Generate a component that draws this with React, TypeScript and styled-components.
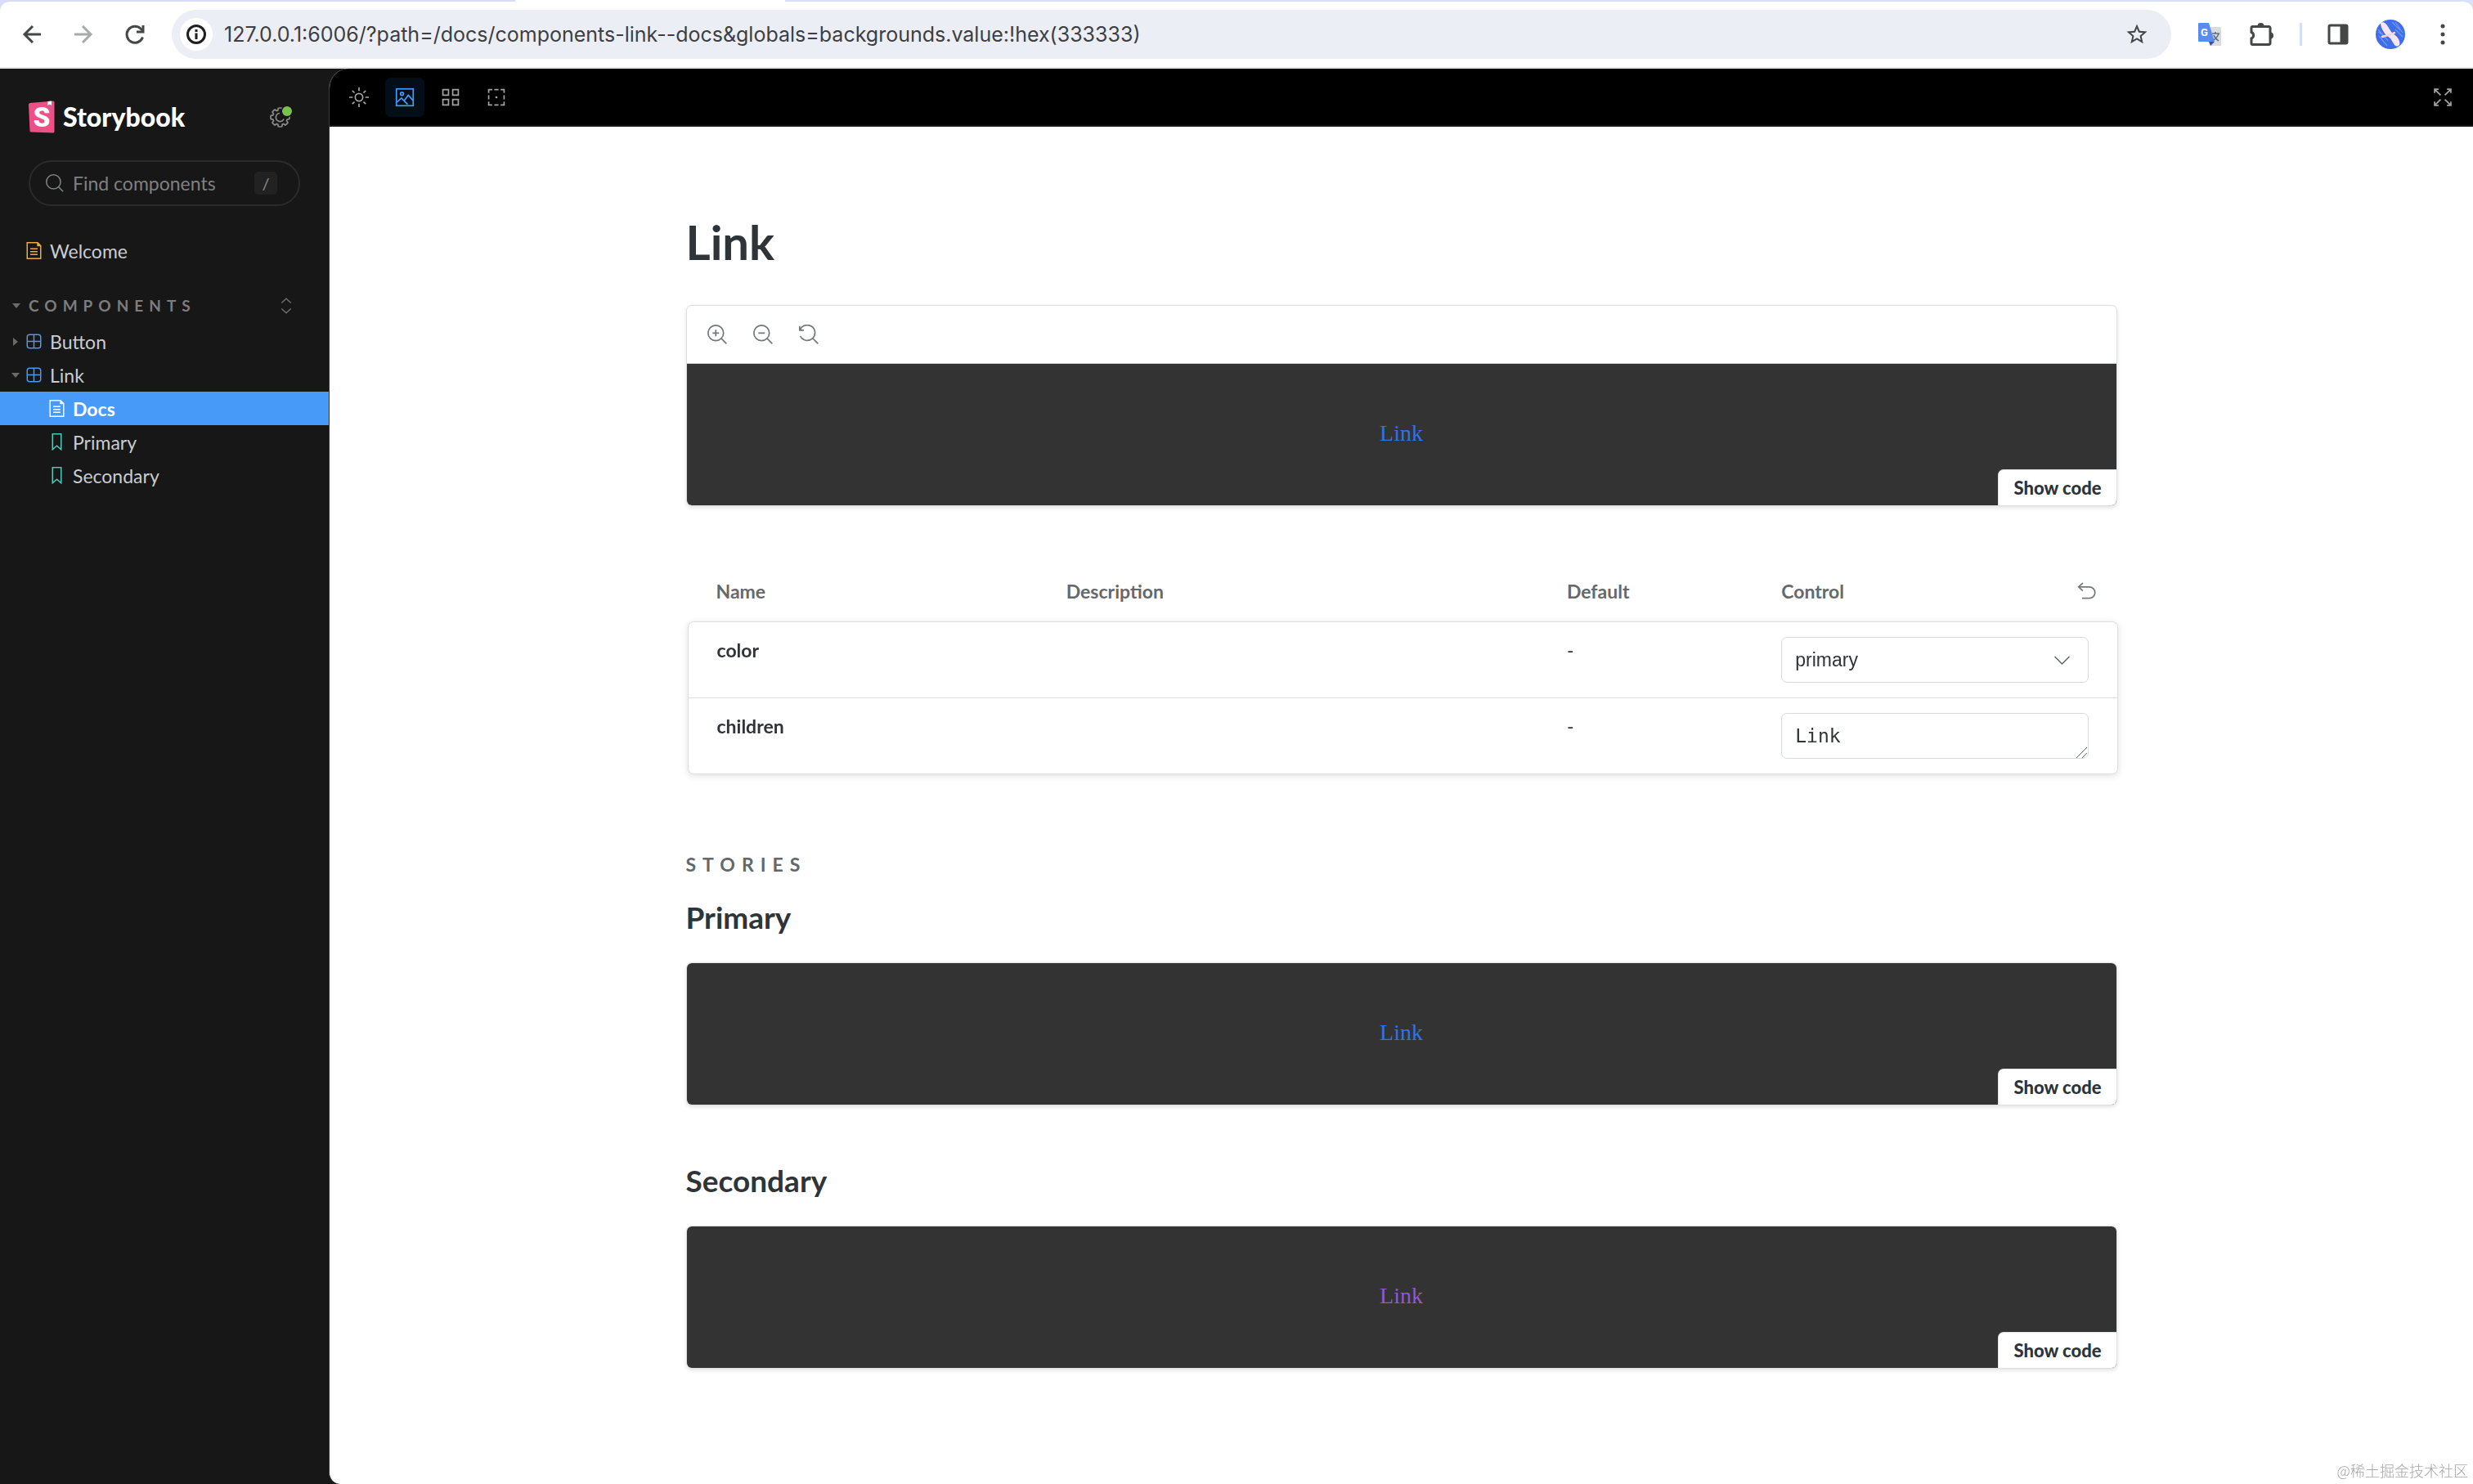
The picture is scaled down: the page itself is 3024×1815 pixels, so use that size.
import React from 'react';
import styled, { createGlobalStyle, css } from 'styled-components';

const sans = `"Lato", "Open Sans", sans-serif`;
const chromeSans = `"Inter", "Liberation Sans", sans-serif`;

const Reset = createGlobalStyle`
  *, *::before, *::after { box-sizing: border-box; }
  body { margin: 0; background: #171717; font-family: ${sans}; }
  button, input, select, textarea { font: inherit; color: inherit; }
  h1, h2, h3 { margin: 0; }
`;

const Page = styled.div`
  min-height: 100vh;
  display: flex;
  flex-direction: column;
`;

/* ---------- Browser chrome ---------- */

const TabStrip = styled.div`
  background: linear-gradient(to right, #d8dcf8 630px, #ffffff 630px, #ffffff 960px, #d8e1fa 960px);
  padding-top: 2px;
`;

const AddressRow = styled.header`
  display: flex;
  align-items: center;
  height: 82px;
  padding: 0 17px 0 19px;
  background: #ffffff;
  border-bottom: 2px solid #e6e6e6;
  border-radius: 12px 12px 0 0;
`;

const IconButton = styled.button<{ $tone?: string }>`
  display: flex;
  align-items: center;
  justify-content: center;
  flex: none;
  width: 40px;
  height: 40px;
  padding: 0;
  border: 0;
  background: none;
  color: ${(p) => p.$tone ?? '#444746'};
`;

const NavButtons = styled.div`
  display: flex;
  gap: 23px;
  margin-right: 25px;
`;

const Omnibox = styled.div`
  display: flex;
  align-items: center;
  flex: 1;
  height: 60px;
  padding: 0 22px 0 10px;
  border-radius: 30px;
  background: #eceef5;
`;

const SiteInfo = styled(IconButton)`
  border-radius: 50%;
  background: #ffffff;
`;

const Address = styled.input`
  flex: 1;
  min-width: 0;
  margin-left: 14px;
  padding: 0;
  border: 0;
  outline: 0;
  background: none;
  font: 400 25px/32px ${chromeSans};
  color: #3c3f43;
`;

const ChromeActions = styled.div`
  display: flex;
  align-items: center;
  gap: 24px;
  padding-left: 27px;
`;

const ChromeDivider = styled.span`
  width: 3px;
  height: 28px;
  margin: 0 0 0 2px;
  background: #d3defb;
`;

/* ---------- Sidebar ---------- */

const Workspace = styled.div`
  display: flex;
  flex: 1;
  background: #171717;
`;

const Sidebar = styled.aside`
  flex: none;
  width: 402px;
  padding-top: 28px;
  color: #c9ccd0;
`;

const Brand = styled.div`
  display: flex;
  align-items: center;
  height: 62px;
  margin-bottom: 22px;
  padding: 0 35px;
`;

const BrandLink = styled.a`
  display: flex;
  align-items: center;
  gap: 10px;
  flex: 1;
  color: #ffffff;
  font-size: 32px;
  line-height: 40px;
  font-weight: 900;
  text-decoration: none;
`;

const SettingsButton = styled(IconButton)`
  width: 45px;
  color: #8b8b8b;
`;

const SearchBox = styled.label`
  display: flex;
  align-items: center;
  height: 56px;
  margin: 0 35px 34px;
  padding: 0 26px 0 19px;
  border: 2px solid #2b2b2b;
  border-radius: 28px;
  color: #7f8082;
`;

const SearchInput = styled.input`
  flex: 1;
  min-width: 0;
  margin-left: 11px;
  padding: 0;
  border: 0;
  outline: 0;
  background: none;
  font-size: 23px;
  line-height: 32px;
  &::placeholder { color: #7f8082; opacity: 1; }
`;

const Key = styled.kbd`
  width: 28px;
  border-radius: 5px;
  background: #222222;
  font: 400 20px/28px ${sans};
  text-align: center;
  color: #8f8f8f;
`;

const Tree = styled.nav`
  display: flex;
  flex-direction: column;
`;

const TreeRow = styled.a<{ $child?: boolean; $selected?: boolean }>`
  display: flex;
  align-items: center;
  height: 41px;
  padding-left: ${(p) => (p.$child ? 41 : 13)}px;
  color: #c9ccd0;
  font-size: 23px;
  line-height: 32px;
  text-decoration: none;
  ${(p) =>
    p.$selected &&
    css`
      background: #479af8;
      color: #ffffff;
      font-weight: 700;
    `}
`;

const Caret = styled.span<{ $wide?: boolean }>`
  display: flex;
  justify-content: center;
  width: 12px;
  margin-right: ${(p) => (p.$wide ? 9 : 6)}px;
  color: #6b6b6b;
`;

const TreeIcon = styled.span`
  display: flex;
  width: 21px;
  margin-right: 9px;
`;

const GroupHeading = styled.div`
  display: flex;
  align-items: center;
  height: 46px;
  margin-top: 24px;
  padding: 0 32px 0 14px;
`;

const GroupToggle = styled.button`
  display: flex;
  align-items: center;
  flex: 1;
  padding: 0;
  border: 0;
  background: none;
  color: #7c7d7f;
  font-size: 19px;
  line-height: 28px;
  font-weight: 700;
  letter-spacing: 7px;
  text-transform: uppercase;
`;

const ExpandAll = styled(IconButton)`
  color: #6f6f6f;
`;

/* ---------- Main panel ---------- */

const Main = styled.main`
  flex: 1;
  min-width: 0;
  overflow: hidden;
  background: #ffffff;
  border-left: 1px solid #3a3a3a;
  border-radius: 24px 0 0 14px;
`;

const Toolbar = styled.div`
  display: flex;
  align-items: center;
  gap: 8px;
  height: 71px;
  padding: 0 13px 0 12px;
  background: #000000;
  border-bottom: 2px solid #181818;
`;

const ToolButton = styled(IconButton)<{ $active?: boolean; $push?: boolean }>`
  width: 48px;
  height: 48px;
  border-radius: 7px;
  color: ${(p) => (p.$active ? '#479af8' : '#a3a3a3')};
  background: ${(p) => (p.$active ? '#030e18' : 'none')};
  margin-left: ${(p) => (p.$push ? 'auto' : 0)};
`;

const Docs = styled.article`
  max-width: 1820px;
  margin: 0 auto;
  padding: 111px 35px 120px;
  color: #2e3438;
`;

const Title = styled.h1`
  margin-bottom: 47px;
  font-size: 58px;
  line-height: 60px;
  font-weight: 700;
`;

const StoriesHeading = styled.h2`
  margin: 96px 0 29px;
  color: #62686c;
  font-size: 23px;
  line-height: 28px;
  font-weight: 700;
  letter-spacing: 8px;
  text-transform: uppercase;
`;

const StoryTitle = styled.h3`
  margin: 0 0 33px;
  font-size: 37px;
  line-height: 44px;
  font-weight: 700;
`;

const Story = styled.section`
  & + & { margin-top: 70px; }
`;

const Card = styled.div`
  position: relative;
  overflow: hidden;
  border: 1px solid #dcdfe1;
  border-radius: 7px;
  box-shadow: 0 2px 5px rgba(0, 0, 0, 0.12);
  background: #ffffff;
`;

const CardToolbar = styled.div`
  display: flex;
  align-items: center;
  gap: 16px;
  height: 71px;
  padding-left: 17px;
  border-bottom: 1px solid #d3d6d8;
`;

const Canvas = styled.div`
  display: flex;
  align-items: center;
  justify-content: center;
  height: 173px;
  padding-bottom: 3px;
  background: #333333;
`;

const StoryLink = styled.a<{ $tone: string }>`
  color: ${(p) => p.$tone};
  font: 400 28px/32px "Liberation Serif", serif;
  text-decoration: none;
`;

const ShowCode = styled.button`
  position: absolute;
  right: 0;
  bottom: 0;
  height: 44px;
  padding: 0 18px;
  border: 1px solid #dfe2e4;
  border-width: 1px 0 0 1px;
  border-radius: 7px 0 0 0;
  background: #ffffff;
  color: #2e3438;
  font-size: 22px;
  line-height: 28px;
  font-weight: 900;
`;

const TableFrame = styled.div`
  margin: 79px -1px 0 2px;
`;

const ArgsTable = styled.table`
  width: 100%;
  table-layout: fixed;
  border-collapse: separate;
  border-spacing: 0;
  font-size: 23px;
  line-height: 32px;
  text-align: left;

  tbody { filter: drop-shadow(0 2px 4px rgba(0, 0, 0, 0.12)); }
`;

const HeadCell = styled.th<{ $width: number }>`
  width: ${(p) => p.$width}%;
  padding: 9px 26px 21px;
  color: #66696b;
  font-weight: 700;
  &:first-child { padding-left: 35px; }
  &:last-child { padding-right: 18px; }
`;

const HeadFlex = styled.div`
  display: flex;
  align-items: center;
  justify-content: space-between;
`;

const ResetButton = styled(IconButton)`
  height: 32px;
  color: #73787c;
`;

const Cell = styled.td`
  padding: 18px 26px;
  vertical-align: top;
  background: #ffffff;
  border-top: 1px solid #dcdfe1;
  &:first-child { padding-left: 35px; border-left: 1px solid #dcdfe1; font-weight: 700; }
  &:last-child { padding-right: 35px; border-right: 1px solid #dcdfe1; }
  tr:last-child > & { border-bottom: 1px solid #dcdfe1; }
  tr:first-child > &:first-child { border-top-left-radius: 7px; }
  tr:first-child > &:last-child { border-top-right-radius: 7px; }
  tr:last-child > &:first-child { border-bottom-left-radius: 7px; }
  tr:last-child > &:last-child { border-bottom-right-radius: 7px; }
`;

const ControlBox = styled.div`
  position: relative;
  display: flex;
`;

const control = css`
  width: 100%;
  height: 56px;
  margin: 0;
  padding: 11px 16px;
  border: 1px solid #d6dadc;
  border-radius: 7px;
  outline: 0;
  background: #ffffff;
  color: #2e3438;
`;

const Select = styled.select`
  ${control}
  appearance: none;
  font: 400 23px/32px "Liberation Sans", sans-serif;
`;

const TextArea = styled.textarea`
  ${control}
  resize: none;
  overflow: hidden;
  font: 400 23px/32px "DejaVu Sans Mono", monospace;
`;

const ControlMark = styled.span<{ $corner?: boolean }>`
  position: absolute;
  right: ${(p) => (p.$corner ? 1 : 22)}px;
  bottom: ${(p) => (p.$corner ? 1 : 17)}px;
  display: flex;
  color: #5f6366;
  pointer-events: none;
`;

const Watermark = styled.small`
  position: fixed;
  right: 6px;
  bottom: 4px;
  color: #a6a6a6;
  font: 300 18px/26px "Noto Sans CJK SC", sans-serif;
`;

/* ---------- Icons ---------- */

type IconProps = { size?: number; children: React.ReactNode; box?: number; weight?: number };

const Icon = ({ size = 24, box = 14, weight = 1, children }: IconProps) => (
  <svg
    width={size}
    height={size}
    viewBox={`0 0 ${box} ${box}`}
    fill="none"
    stroke="currentColor"
    strokeWidth={weight}
    aria-hidden="true"
  >
    {children}
  </svg>
);

const BackIcon = () => (
  <Icon size={24} box={24} weight={3}><path d="M23 12H3M13 2 3 12l10 10" /></Icon>
);
const ForwardIcon = () => (
  <Icon size={24} box={24} weight={3}><path d="M1 12h20M11 2l10 10-10 10" /></Icon>
);
const ReloadIcon = () => (
  <Icon size={26} box={26} weight={3}>
    <path d="M22.5 16.5A10 10 0 1 1 20 6l3 3" />
    <path d="M23 2v8h-8" />
  </Icon>
);
const InfoIcon = () => (
  <Icon size={26} box={26} weight={3}>
    <circle cx="13" cy="13" r="10.5" />
    <path d="M13 11.5V19M13 7v3" />
  </Icon>
);
const StarIcon = () => (
  <svg width="30" height="30" viewBox="0 0 24 24" fill="currentColor" aria-hidden="true">
    <path d="M22 9.240l-7.190-.620L12 2 9.190 8.630 2 9.240l5.460 4.730L5.820 21 12 17.270 18.180 21l-1.630-7.030L22 9.240zM12 15.400l-3.760 2.270 1-4.280-3.320-2.880 4.380-.380L12 6.100l1.710 4.040 4.380.380-3.320 2.880 1 4.280L12 15.400z" />
  </svg>
);
const TranslateIcon = () => (
  <svg width="28" height="28" viewBox="0 0 28 28" aria-hidden="true">
    <path d="M10 5h16a2 2 0 0 1 2 2v21H15z" fill="#d9dbdf" />
    <path d="M13 23h7l-5 5z" fill="#3c49b5" />
    <path d="M1 0h12l7 23H1a1 1 0 0 1-1-1V1a1 1 0 0 1 1-1z" fill="#5a8cf0" />
    <path d="M17 13h9M21 11v2M25 13c-1 4-3.500 6-6 8M19 15c1 3 3 5 6 7" stroke="#5d7180" strokeWidth="1.500" fill="none" />
    <text x="3" y="16" fontFamily="Roboto, sans-serif" fontSize="13" fontWeight="700" fill="#ffffff">G</text>
  </svg>
);
const PuzzleIcon = () => (
  <Icon size={30} box={30} weight={3}>
    <path d="M3.500 5.500h20a1.500 1.500 0 0 1 1.500 1.500v19a1.500 1.500 0 0 1-1.500 1.500h-20A1.500 1.500 0 0 1 2 26v-6a4 4 0 0 0 0-7.500V7a1.500 1.500 0 0 1 1.500-1.500z" />
    <path d="M9.500 5a4 4 0 0 1 8 0zM25 12.500a4 4 0 0 1 0 8z" fill="currentColor" stroke="none" />
  </Icon>
);
const PanelIcon = () => (
  <Icon size={26} box={26} weight={3}>
    <rect x="2" y="2" width="22" height="22" rx="1.500" />
    <path d="M15.500 2H24v22h-8.500z" fill="currentColor" stroke="none" />
  </Icon>
);
const Avatar = () => (
  <svg width="36" height="36" viewBox="0 0 36 36" aria-hidden="true">
    <circle cx="18" cy="18" r="18" fill="#3f6ee8" />
    <path d="M3 12l12 14M4 20l10 12M20 3l10 10M24 3l9 13M3 15l8 5M24 12l9 9" stroke="#7398f2" strokeWidth="1.200" />
    <path d="M6 4c3-2 6 0 8 3l5 8 7 6c3 4 4 7 3 10-2 2-4 2-6 0l-5-8-6-5C9 14 6 9 6 4z" fill="#f5e6f2" />
    <path d="M8 21c5-2 11-2 15-5" stroke="#f3d5e2" strokeWidth="2.500" fill="none" strokeLinecap="round" />
  </svg>
);
const MoreIcon = () => (
  <svg width="28" height="28" viewBox="0 0 28 28" fill="currentColor" aria-hidden="true">
    <circle cx="14" cy="4" r="2.500" />
    <circle cx="14" cy="14" r="2.500" />
    <circle cx="14" cy="24" r="2.500" />
  </svg>
);

const LogoMark = () => (
  <svg width="32" height="40" viewBox="0 0 32 40" aria-hidden="true">
    <path d="M1.500 3 30 .500a1.500 1.500 0 0 1 1.500 1.500v36a1.500 1.500 0 0 1-1.500 1.500L3 38.500A1.500 1.500 0 0 1 1.500 37L0 5a2 2 0 0 1 1.500-2z" fill="#ec5087" />
    <path d="M23.500 1l4.500-.500V6l-2.200-1.600L23.300 6z" fill="#ffffff" />
    <text x="16" y="32" textAnchor="middle" fontFamily="Roboto, sans-serif" fontSize="33" fontWeight="900" fill="#ffffff">S</text>
  </svg>
);

const gearOutline = Array.from({ length: 8 }, (_, i) => {
  const point = (offset: number, r: number) => {
    const a = ((i * 45 + offset) * Math.PI) / 180;
    return `${(12.5 + r * Math.cos(a)).toFixed(2)} ${(14.5 + r * Math.sin(a)).toFixed(2)}`;
  };
  return `${i ? 'L' : 'M'}${point(-11, 11.5)}A11.5 11.5 0 0 1 ${point(11, 11.5)}L${point(17, 9)}L${point(28, 9)}`;
}).join('') + 'Z';

const GearIcon = () => (
  <svg width="30" height="28" viewBox="0 0 30 28" fill="none" aria-hidden="true">
    <path d={gearOutline} stroke="currentColor" strokeWidth="1.700" strokeLinejoin="round" />
    <path d="M12 9.500a5 5 0 1 0 5 7" stroke="currentColor" strokeWidth="1.700" />
    <circle cx="21" cy="7" r="7.500" fill="#171717" />
    <circle cx="21" cy="7" r="6" fill="#79c14e" />
  </svg>
);

const SearchIcon = () => (
  <Icon size={22} weight={1}><circle cx="6" cy="6" r="5.500" /><path d="M10 10l3.500 3.500" /></Icon>
);
const SunIcon = () => (
  <Icon>
    <circle cx="7" cy="7" r="2.700" />
    <path d="M7 0v2.500M7 11.500V14M0 7h2.500M11.500 7H14M2.200 2.200l1.600 1.600M10.200 10.200l1.600 1.600M2.200 11.800l1.600-1.600M10.200 3.800l1.600-1.600" />
  </Icon>
);
const PhotoIcon = () => (
  <Icon>
    <rect x="1" y="1" width="12" height="12" />
    <circle cx="5" cy="4.500" r="1.100" />
    <path d="M1.500 10.500 4.500 7.500l2 2 3-4 3.500 4M6.500 9.500l2.500 2.500" />
  </Icon>
);
const GridIcon = () => (
  <Icon>
    <path d="M1.500 1.500h4v4h-4zM8.500 1.500h4v4h-4zM1.500 8.500h4v4h-4zM8.500 8.500h4v4h-4z" />
  </Icon>
);
const OutlineIcon = () => (
  <Icon>
    <path d="M1.500 4V1.500H4M10 1.500h2.500V4M12.500 10v2.500H10M4 12.500H1.500V10M5.500 1.500h3M5.500 12.500h3M1.500 5.500v3M12.500 5.500v3" />
    <circle cx="7" cy="7" r=".8" fill="currentColor" stroke="none" />
  </Icon>
);
const ExpandIcon = () => (
  <Icon>
    <path d="M1.200 4V1.200H4M1.200 1.200l4.300 4.300M10 1.200h2.800V4M12.800 1.200 8.500 5.500M12.800 10v2.800H10M12.800 12.800 8.500 8.500M4 12.800H1.200V10M1.200 12.800l4.300-4.300" />
  </Icon>
);
const ZoomInIcon = () => (
  <Icon><circle cx="6" cy="6" r="5.500" /><path d="M10 10l3.600 3.600M6 3.700v4.600M3.700 6h4.600" /></Icon>
);
const ZoomOutIcon = () => (
  <Icon><circle cx="6" cy="6" r="5.500" /><path d="M10 10l3.600 3.600M3.700 6h4.600" /></Icon>
);
const ZoomResetIcon = () => (
  <Icon>
    <path d="M.5 1v3h3M.8 3.800A5.500 5.500 0 1 1 1 8.300M10 10l3.600 3.600" />
  </Icon>
);
const UndoIcon = () => (
  <Icon><path d="M4 1.200 1 4l3 2.800M1 4h7.700a4 4 0 0 1 0 8H3.500" /></Icon>
);
const ChevronIcon = () => (
  <Icon size={21} weight={1}><path d="M1 4l6 6 6-6" /></Icon>
);
const ResizeIcon = () => (
  <Icon size={14} weight={1}><path d="M0 14 13 1M7 14l6-6" /></Icon>
);
const SortIcon = () => (
  <Icon size={20}><path d="M3 4.500 7 .8l4 3.700M3 9.500l4 3.700 4-3.700" /></Icon>
);
const CaretDown = () => (
  <svg width="10" height="6" viewBox="0 0 10 6" fill="currentColor" aria-hidden="true"><path d="M0 0h10L5 6z" /></svg>
);
const CaretRight = () => (
  <svg width="6" height="10" viewBox="0 0 6 10" fill="currentColor" aria-hidden="true"><path d="M0 0v10l6-5z" /></svg>
);
const DocIcon = ({ tone }: { tone: string }) => (
  <svg width="21" height="21" viewBox="0 0 14 14" fill="none" stroke={tone} aria-hidden="true">
    <path d="M1.500.5H10L12.500 3v10.500h-11z" />
    <path d="M9.500 0 13 3.500H9.500z" fill={tone} stroke="none" />
    <path d="M4 5.500h6M4 7.800h6M4 10.100h6" />
  </svg>
);
const ComponentIcon = () => (
  <svg width="21" height="21" viewBox="0 0 14 14" fill="none" stroke="#4a97ec" aria-hidden="true">
    <rect x="1.500" y="1.500" width="11" height="11" rx="2" />
    <path d="M7 1.500v11M1.500 7h11" />
  </svg>
);
const BookmarkIcon = () => (
  <svg width="21" height="21" viewBox="0 0 14 14" fill="none" stroke="#4fc7bd" aria-hidden="true">
    <path d="M3.500.5h7v12.700L7 10.200l-3.500 3z" />
  </svg>
);

/* ---------- Composition ---------- */

const Preview = ({ tone, toolbar }: { tone: string; toolbar?: boolean }) => (
  <Card>
    {toolbar && (
      <CardToolbar>
        <IconButton aria-label="Zoom in" $tone="#73787c"><ZoomInIcon /></IconButton>
        <IconButton aria-label="Zoom out" $tone="#73787c"><ZoomOutIcon /></IconButton>
        <IconButton aria-label="Reset zoom" $tone="#73787c"><ZoomResetIcon /></IconButton>
      </CardToolbar>
    )}
    <Canvas>
      <StoryLink href="#" $tone={tone}>Link</StoryLink>
    </Canvas>
    <ShowCode>Show code</ShowCode>
  </Card>
);

const BLUE = '#3173e6';
const PURPLE = '#9058d2';

export default function App() {
  return (
    <Page>
      <Reset />
      <TabStrip>
        <AddressRow>
          <NavButtons>
            <IconButton aria-label="Back"><BackIcon /></IconButton>
            <IconButton aria-label="Forward" $tone="#a9aaaa"><ForwardIcon /></IconButton>
            <IconButton aria-label="Reload"><ReloadIcon /></IconButton>
          </NavButtons>
          <Omnibox>
            <SiteInfo aria-label="Site information" $tone="#1f1f1f"><InfoIcon /></SiteInfo>
            <Address
              aria-label="Address"
              defaultValue="127.0.0.1:6006/?path=/docs/components-link--docs&globals=backgrounds.value:!hex(333333)"
            />
            <IconButton aria-label="Bookmark this page"><StarIcon /></IconButton>
          </Omnibox>
          <ChromeActions>
            <IconButton aria-label="Translate"><TranslateIcon /></IconButton>
            <IconButton aria-label="Extensions"><PuzzleIcon /></IconButton>
            <ChromeDivider />
            <IconButton aria-label="Side panel"><PanelIcon /></IconButton>
            <IconButton aria-label="Profile"><Avatar /></IconButton>
            <IconButton aria-label="Menu"><MoreIcon /></IconButton>
          </ChromeActions>
        </AddressRow>
      </TabStrip>

      <Workspace>
        <Sidebar>
          <Brand>
            <BrandLink href="#"><LogoMark />Storybook</BrandLink>
            <SettingsButton aria-label="Settings"><GearIcon /></SettingsButton>
          </Brand>
          <SearchBox>
            <SearchIcon />
            <SearchInput placeholder="Find components" aria-label="Find components" />
            <Key>/</Key>
          </SearchBox>
          <Tree>
            <TreeRow href="#"><Caret /><TreeIcon><DocIcon tone="#e8ac3c" /></TreeIcon>Welcome</TreeRow>
            <GroupHeading>
              <GroupToggle><Caret $wide><CaretDown /></Caret>Components</GroupToggle>
              <ExpandAll aria-label="Expand all"><SortIcon /></ExpandAll>
            </GroupHeading>
            <TreeRow href="#"><Caret><CaretRight /></Caret><TreeIcon><ComponentIcon /></TreeIcon>Button</TreeRow>
            <TreeRow href="#"><Caret><CaretDown /></Caret><TreeIcon><ComponentIcon /></TreeIcon>Link</TreeRow>
            <TreeRow href="#" $child $selected><Caret /><TreeIcon><DocIcon tone="#ffffff" /></TreeIcon>Docs</TreeRow>
            <TreeRow href="#" $child><Caret /><TreeIcon><BookmarkIcon /></TreeIcon>Primary</TreeRow>
            <TreeRow href="#" $child><Caret /><TreeIcon><BookmarkIcon /></TreeIcon>Secondary</TreeRow>
          </Tree>
        </Sidebar>

        <Main>
          <Toolbar>
            <ToolButton aria-label="Theme"><SunIcon /></ToolButton>
            <ToolButton aria-label="Backgrounds" $active><PhotoIcon /></ToolButton>
            <ToolButton aria-label="Grid"><GridIcon /></ToolButton>
            <ToolButton aria-label="Outline"><OutlineIcon /></ToolButton>
            <ToolButton aria-label="Full screen" $push><ExpandIcon /></ToolButton>
          </Toolbar>
          <Docs>
            <Title>Link</Title>
            <Preview tone={BLUE} toolbar />
            <TableFrame>
              <ArgsTable>
                <thead>
                  <tr>
                    <HeadCell $width={25}>Name</HeadCell>
                    <HeadCell $width={35}>Description</HeadCell>
                    <HeadCell $width={15}>Default</HeadCell>
                    <HeadCell $width={25}>
                      <HeadFlex>
                        Control
                        <ResetButton aria-label="Reset controls"><UndoIcon /></ResetButton>
                      </HeadFlex>
                    </HeadCell>
                  </tr>
                </thead>
                <tbody>
                  <tr>
                    <Cell><label htmlFor="control-color">color</label></Cell>
                    <Cell />
                    <Cell>-</Cell>
                    <Cell>
                      <ControlBox>
                        <Select id="control-color" defaultValue="primary">
                          <option>primary</option>
                          <option>secondary</option>
                        </Select>
                        <ControlMark><ChevronIcon /></ControlMark>
                      </ControlBox>
                    </Cell>
                  </tr>
                  <tr>
                    <Cell><label htmlFor="control-children">children</label></Cell>
                    <Cell />
                    <Cell>-</Cell>
                    <Cell>
                      <ControlBox>
                        <TextArea id="control-children" rows={1} defaultValue="Link" />
                        <ControlMark $corner><ResizeIcon /></ControlMark>
                      </ControlBox>
                    </Cell>
                  </tr>
                </tbody>
              </ArgsTable>
            </TableFrame>
            <StoriesHeading>Stories</StoriesHeading>
            <Story>
              <StoryTitle>Primary</StoryTitle>
              <Preview tone={BLUE} />
            </Story>
            <Story>
              <StoryTitle>Secondary</StoryTitle>
              <Preview tone={PURPLE} />
            </Story>
          </Docs>
        </Main>
      </Workspace>
      <Watermark>@稀土掘金技术社区</Watermark>
    </Page>
  );
}
